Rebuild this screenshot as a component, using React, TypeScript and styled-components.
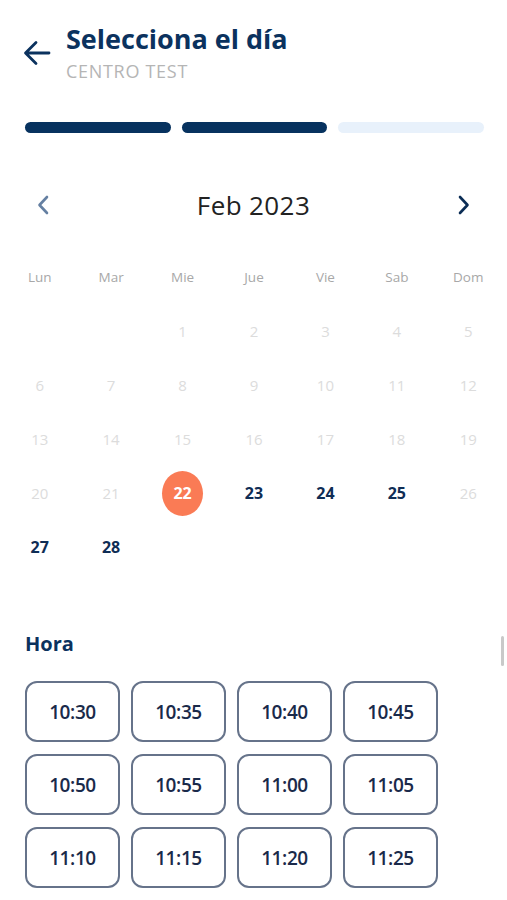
import React from 'react';
import styled, { createGlobalStyle } from 'styled-components';

const GlobalStyle = createGlobalStyle`
  html, body {
    margin: 0;
    padding: 0;
    background: #ffffff;
    font-family: 'Open Sans', 'Noto Sans', sans-serif;
  }
`;

const NAVY = '#0b325e';

const Page = styled.div`
  position: relative;
  width: 507px;
  height: 900px;
  overflow: hidden;
  box-sizing: border-box;
  padding: 23px 23px 0 25px;
`;

const Header = styled.div`
  display: flex;
  align-items: flex-start;
  gap: 13px;
  margin-left: -4px;
`;

const BackButton = styled.button`
  border: none;
  background: none;
  padding: 0;
  margin-top: 14px;
  width: 32px;
  height: 32px;
  display: flex;
  align-items: center;
  justify-content: center;
  cursor: pointer;
`;

const TitleBlock = styled.div`
  display: flex;
  flex-direction: column;
`;

const Title = styled.h1`
  margin: 0;
  font-size: 27px;
  line-height: 32px;
  font-weight: 700;
  color: ${NAVY};
`;

const Subtitle = styled.div`
  margin-top: 5px;
  font-size: 18px;
  line-height: 22px;
  color: #b5b5b5;
  letter-spacing: 0.7px;
`;

const Progress = styled.div`
  display: flex;
  gap: 11px;
  margin-top: 40px;
`;

const Step = styled.div<{ $done: boolean }>`
  flex: 1;
  height: 11px;
  border-radius: 6px;
  background: ${(p) => (p.$done ? '#07325f' : '#e8f1fb')};
`;

const MonthNav = styled.div`
  display: flex;
  align-items: center;
  justify-content: space-between;
  margin-top: 56px;
  padding: 0 12px 0 10px;
  height: 32px;
`;

const MonthLabel = styled.div`
  font-size: 26px;
  font-weight: 500;
  color: #222222;
  letter-spacing: 0.4px;
`;

const Chevron = styled.button`
  border: none;
  background: none;
  padding: 0;
  width: 16px;
  height: 24px;
  display: flex;
  align-items: center;
  justify-content: center;
`;

const Calendar = styled.div`
  display: grid;
  grid-template-columns: repeat(7, 1fr);
  grid-auto-rows: 54px;
  margin: 29px -20px 0 -21px;
`;

const WeekDay = styled.div`
  display: flex;
  align-items: center;
  justify-content: center;
  font-size: 13.5px;
  color: #a8a8a8;
`;

const DayCell = styled.div`
  display: flex;
  align-items: center;
  justify-content: center;
`;

const Day = styled.div<{ $state: 'off' | 'on' | 'selected' }>`
  width: 41px;
  height: 45px;
  border-radius: 50%;
  display: flex;
  align-items: center;
  justify-content: center;
  font-size: ${(p) => (p.$state === 'off' ? '15px' : '16px')};
  font-weight: ${(p) => (p.$state === 'off' ? 400 : 700)};
  color: ${(p) =>
    p.$state === 'off' ? '#dcdcdc' : p.$state === 'selected' ? '#ffffff' : '#0f2d55'};
  background: ${(p) => (p.$state === 'selected' ? '#fa7b55' : 'transparent')};
`;

const SectionTitle = styled.h2`
  margin: 58px 0 0;
  font-size: 20px;
  line-height: 24px;
  font-weight: 700;
  color: ${NAVY};
`;

const Slots = styled.div`
  display: grid;
  grid-template-columns: repeat(4, 95px);
  column-gap: 11px;
  row-gap: 12px;
  margin-top: 25px;
`;

const Slot = styled.button<{ $dark?: boolean }>`
  height: 61px;
  box-sizing: border-box;
  border: 2px solid ${(p) => (p.$dark ? '#17365e' : '#66738a')};
  border-radius: 12px;
  background: #ffffff;
  font-family: inherit;
  font-size: 19px;
  font-weight: 600;
  color: #1a2a4a;
  letter-spacing: -0.4px;
`;

const ScrollThumb = styled.div`
  position: absolute;
  right: 3px;
  top: 636px;
  width: 3px;
  height: 30px;
  border-radius: 2px;
  background: #c9c9c9;
`;

const weekDays = ['Lun', 'Mar', 'Mie', 'Jue', 'Vie', 'Sab', 'Dom'];
const available = [22, 23, 24, 25, 27, 28];
const selectedDay = 22;

const times = [
  '10:30', '10:35', '10:40', '10:45',
  '10:50', '10:55', '11:00', '11:05',
  '11:10', '11:15', '11:20', '11:25',
  '11:30', '11:35', '11:40', '11:45',
];

function App() {
  // Feb 2023 starts on a Wednesday (offset 2)
  const cells: (number | null)[] = [null, null];
  for (let d = 1; d <= 28; d++) cells.push(d);

  return (
    <>
      <GlobalStyle />
      <Page>
        <Header>
          <BackButton aria-label="Volver">
            <svg width="30" height="30" viewBox="0 0 30 30" fill="none">
              <path
                d="M27 15H4M14 4.5L3.5 15L14 25.5"
                stroke={NAVY}
                strokeWidth="2.8"
                strokeLinecap="round"
                strokeLinejoin="round"
              />
            </svg>
          </BackButton>
          <TitleBlock>
            <Title>Selecciona el día</Title>
            <Subtitle>CENTRO TEST</Subtitle>
          </TitleBlock>
        </Header>

        <Progress>
          <Step $done />
          <Step $done />
          <Step $done={false} />
        </Progress>

        <MonthNav>
          <Chevron aria-label="Mes anterior">
            <svg width="14" height="22" viewBox="0 0 14 22" fill="none">
              <path
                d="M11 3L3.5 11L11 19"
                stroke="#6580a2"
                strokeWidth="2.6"
                strokeLinecap="round"
                strokeLinejoin="round"
              />
            </svg>
          </Chevron>
          <MonthLabel>Feb 2023</MonthLabel>
          <Chevron aria-label="Mes siguiente">
            <svg width="14" height="22" viewBox="0 0 14 22" fill="none">
              <path
                d="M3 3L10.5 11L3 19"
                stroke="#0b2d55"
                strokeWidth="2.6"
                strokeLinecap="round"
                strokeLinejoin="round"
              />
            </svg>
          </Chevron>
        </MonthNav>

        <Calendar>
          {weekDays.map((w) => (
            <WeekDay key={w}>{w}</WeekDay>
          ))}
          {cells.map((d, i) => (
            <DayCell key={i}>
              {d !== null && (
                <Day
                  $state={
                    d === selectedDay ? 'selected' : available.includes(d) ? 'on' : 'off'
                  }
                >
                  {d}
                </Day>
              )}
            </DayCell>
          ))}
        </Calendar>

        <SectionTitle>Hora</SectionTitle>
        <Slots>
          {times.map((t, i) => (
            <Slot key={t} $dark={i >= 12}>
              {t}
            </Slot>
          ))}
        </Slots>
        <ScrollThumb />
      </Page>
    </>
  );
}

export default App;
